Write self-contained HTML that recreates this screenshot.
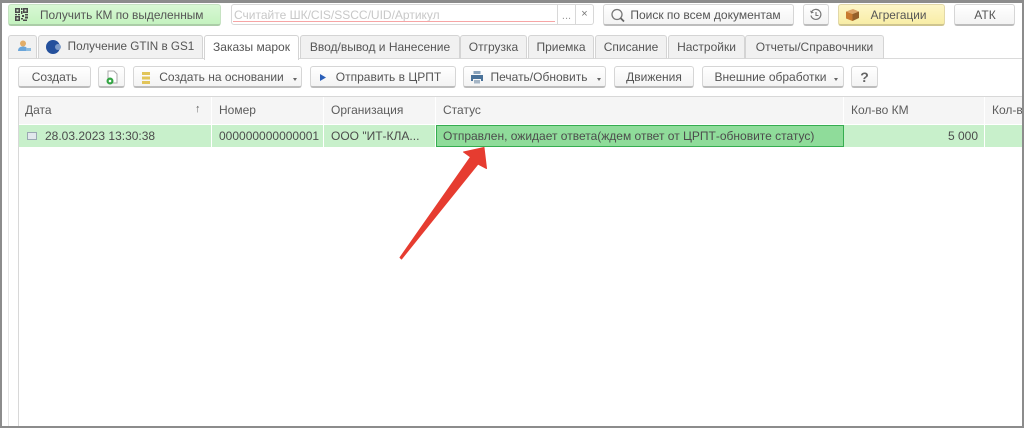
<!DOCTYPE html>
<html><head><meta charset="utf-8"><style>
html,body{margin:0;padding:0}
body{width:1024px;height:428px;position:relative;overflow:hidden;background:#fff;font-family:"Liberation Sans",sans-serif;font-size:12px;color:#555}
#w{position:absolute;left:0;top:0;width:1024px;height:428px;filter:blur(.35px)}
.a{position:absolute;box-sizing:border-box;white-space:nowrap}
.b{position:absolute;box-sizing:border-box;height:22px;border:1px solid #d6d6d6;border-bottom:2px solid #bdbdbd;border-radius:3px;background:linear-gradient(#fff,#f3f3f3);text-align:center;line-height:20px;white-space:nowrap}
.t{position:absolute;box-sizing:border-box;top:35px;height:24px;border:1px solid #d4d4d4;border-bottom:1px solid #d8d8d8;border-radius:3px 3px 0 0;background:#f1f1f1;line-height:22px;text-align:center;white-space:nowrap}
.h{position:absolute;top:97px;height:27px;line-height:26px;background:#f5f5f5;padding-left:7px;box-sizing:border-box;color:#5c5c5c;white-space:nowrap;overflow:hidden}
.c{position:absolute;top:125px;height:22px;line-height:22px;background:#c8f0cb;padding-left:7px;box-sizing:border-box;white-space:nowrap;color:#4c4c4c}
.d{position:absolute;width:0;height:0;border:2.500px solid transparent;border-top:3px solid #666;border-bottom:0}
</style></head><body>
<div id="w">

<div class="b" style="left:8px;top:4px;width:213px;height:22px;background:linear-gradient(#d8f8d4,#c4f2bf);border-color:#c6e2c2;border-bottom-color:#abcda7;text-align:left;padding-left:31px;font-size:11.900px">Получить КМ по выделенным</div>
<svg class="a" style="left:14px;top:7px" width="15" height="15" viewBox="0 0 15 15"><path d="M1 1h5v5H1zM9 1h5v5H9zM1 9h5v5H1zM7 1h1.500v2H7zM7 4h1.500v3H7zM1 7h2v1.300H1zM4 7h2v1.300H4zM8 8h2v2H8zM11 7h3v1.500h-3zM11 9.500h3v2h-3zM7 11h2v1.500H7zM9 12.500h4V14H9z" fill="#4a4a4a"/><path d="M2.500 2.500h2v2h-2zM10.500 2.500h2v2h-2zM2.500 10.500h2v2h-2z" fill="#cfe8cb"/></svg>

<div class="a" style="left:231px;top:4px;width:327px;height:21px;border:1px solid #d8d8d8;border-radius:3px 0 0 3px;padding:0 0 0 2px;line-height:20px;color:#c8c8c8">Считайте ШК/CIS/SSCC/UID/Артикул</div>
<div class="a" style="left:233px;top:21px;width:322px;height:1px;background:#f7a5a5"></div>
<div class="a" style="left:558px;top:4px;width:18px;height:21px;border:1px solid #d8d8d8;border-left:0;text-align:center;line-height:22px;color:#999;font-size:11px">...</div>
<div class="a" style="left:576px;top:4px;width:18px;height:21px;border:1px solid #d8d8d8;border-left:0;border-radius:0 3px 3px 0;text-align:center;line-height:19px;color:#777;font-size:11px">×</div>

<div class="b" style="left:603px;top:4px;width:191px;padding-left:14px">Поиск по всем документам</div>
<svg class="a" style="left:610px;top:7px" width="16" height="16" viewBox="0 0 16 16"><circle cx="7" cy="7.500" r="5" fill="none" stroke="#777" stroke-width="1.300"/><path d="M10.500 11L14 14.500" stroke="#666" stroke-width="1.800"/></svg>

<div class="b" style="left:803px;top:4px;width:26px"></div>
<svg class="a" style="left:809px;top:8px" width="14" height="14" viewBox="0 0 14 14"><path d="M2.500 4A5 5 0 1 1 2 7.500" fill="none" stroke="#777" stroke-width="1.200"/><path d="M1 2.500L2.200 5.500L5 4.500z" fill="#777"/><path d="M7 4v3.500h2.500" fill="none" stroke="#777" stroke-width="1.100"/></svg>

<div class="b" style="left:838px;top:4px;width:107px;background:linear-gradient(#fdf6c8,#f8eda6);border-color:#e2d8a8;border-bottom-color:#cfc58f;padding-left:14px;font-size:11.800px">Агрегации</div>
<svg class="a" style="left:845px;top:8px" width="15" height="14" viewBox="0 0 15 14"><path d="M1 3.500L8 1L14 3.500L7.500 6z" fill="#dca56a"/><path d="M1 3.500L7.500 6V13L1 10.500z" fill="#c87a30"/><path d="M7.500 6L14 3.500V10L7.500 13z" fill="#96602a"/></svg>

<div class="b" style="left:954px;top:4px;width:61px;padding-left:1px">АТК</div>

<div class="a" style="left:8px;top:58px;width:1014px;height:1px;background:#dadada"></div>
<div class="t" style="left:8px;width:29px"></div>
<svg class="a" style="left:17px;top:40px" width="15" height="13" viewBox="0 0 15 13"><circle cx="6" cy="3.500" r="3" fill="#e2ad68"/><path d="M1 11c0-3 2-4.500 5-4.500s4 1 4 3v1.500z" fill="#6aa5da"/><path d="M9 8h5v3H9z" fill="#8bbbe0"/></svg>
<div class="t" style="left:38px;width:165px;padding-left:21px;font-size:11.700px">Получение GTIN в GS1</div>
<svg class="a" style="left:45px;top:39px" width="18" height="16" viewBox="0 0 18 16"><circle cx="8" cy="8" r="7" fill="#24509c"/><circle cx="13" cy="8" r="3" fill="#7e9cc9"/></svg>
<div class="t" style="left:204px;width:95px;background:#fff;border-bottom:0;height:25px">Заказы марок</div>
<div class="t" style="left:300px;width:160px">Ввод/вывод и Нанесение</div>
<div class="t" style="left:460px;width:67px">Отгрузка</div>
<div class="t" style="left:528px;width:66px">Приемка</div>
<div class="t" style="left:595px;width:72px">Списание</div>
<div class="t" style="left:668px;width:77px">Настройки</div>
<div class="t" style="left:745px;width:139px">Отчеты/Справочники</div>

<div class="b" style="left:18px;top:66px;width:73px">Создать</div>
<div class="b" style="left:98px;top:66px;width:27px"></div>
<svg class="a" style="left:105px;top:70px" width="14" height="15" viewBox="0 0 14 15"><path d="M3 1h6l3 3v9H3z" fill="#fff" stroke="#aaa"/><circle cx="5" cy="11" r="3.500" fill="#35a545"/><circle cx="5" cy="11" r="1.300" fill="#fff"/></svg>
<div class="b" style="left:133px;top:66px;width:169px;padding-left:17px;padding-right:9px">Создать на основании</div>
<svg class="a" style="left:141px;top:71px" width="10" height="14" viewBox="0 0 10 14"><path d="M1 1h8v3H1zM1 5.500h8v3H1zM1 10h8v3H1z" fill="#e2c55a"/></svg>
<div class="d" style="left:293px;top:78px"></div>
<div class="b" style="left:310px;top:66px;width:146px;padding-left:11px">Отправить в ЦРПТ</div>
<svg class="a" style="left:320px;top:74px" width="6" height="7" viewBox="0 0 6 7"><path d="M0 0L6 3.500L0 7z" fill="#2a5fb8"/></svg>
<div class="b" style="left:463px;top:66px;width:143px;padding-left:17px;padding-right:8px">Печать/Обновить</div>
<svg class="a" style="left:470px;top:71px" width="14" height="13" viewBox="0 0 14 13"><path d="M3.500 0h7v3h-7z" fill="#8aa3bb"/><path d="M1 4h12v6H11V8H3v2H1z" fill="#4a7299"/><path d="M4 9h6v3.500H4z" fill="#a5b5c5"/></svg>
<div class="d" style="left:597px;top:78px"></div>
<div class="b" style="left:614px;top:66px;width:80px">Движения</div>
<div class="b" style="left:702px;top:66px;width:142px;padding-right:5px">Внешние обработки</div>
<div class="d" style="left:834px;top:78px"></div>
<div class="b" style="left:851px;top:66px;width:27px;font-weight:bold;font-size:14px;color:#666">?</div>

<div class="a" style="left:18px;top:96px;width:1004px;height:1px;background:#d8d8d8"></div>
<div class="a" style="left:18px;top:96px;width:1px;height:330px;background:#d8d8d8"></div>
<div class="a" style="left:8px;top:59px;width:1px;height:367px;background:#e6e6e6"></div>

<div class="h" style="left:19px;width:192px;padding-left:6px">Дата</div>
<div class="a" style="left:195px;top:103px;font-size:11px;color:#666">↑</div>
<div class="h" style="left:212px;width:111px">Номер</div>
<div class="h" style="left:324px;width:111px">Организация</div>
<div class="h" style="left:436px;width:407px">Статус</div>
<div class="h" style="left:844px;width:140px">Кол-во КМ</div>
<div class="h" style="left:985px;width:37px">Кол-в</div>

<div class="c" style="left:19px;width:192px;padding-left:26px">28.03.2023 13:30:38</div>
<div class="a" style="left:27px;top:132px;width:10px;height:8px;background:#e2e8ec;border:1px solid #9aa8b2"></div>
<div class="c" style="left:212px;width:111px">000000000000001</div>
<div class="c" style="left:324px;width:111px">ООО "ИТ-КЛА...</div>
<div class="c" style="left:436px;top:125px;width:408px;background:#8fdc9a;border:1px solid #35ad50;line-height:20px;padding-left:6px">Отправлен, ожидает ответа(ждем ответ от ЦРПТ-обновите статус)</div>
<div class="c" style="left:844px;width:140px;text-align:right;padding-right:6px">5 000</div>
<div class="c" style="left:985px;width:37px"></div>

<svg class="a" style="left:0;top:0" width="1024" height="428" viewBox="0 0 1024 428"><path d="M463.500 152L484 147.500L486.500 168.500L478 164L401.500 259L400 257.500L470.500 157z" fill="#e63c30" stroke="#e63c30" stroke-width="1" stroke-linejoin="round"/></svg>
</div>
<div class="a" style="left:0;top:0;width:1024px;height:428px;border:2px solid #8c8c8c;border-top-width:3px"></div>
</body></html>
